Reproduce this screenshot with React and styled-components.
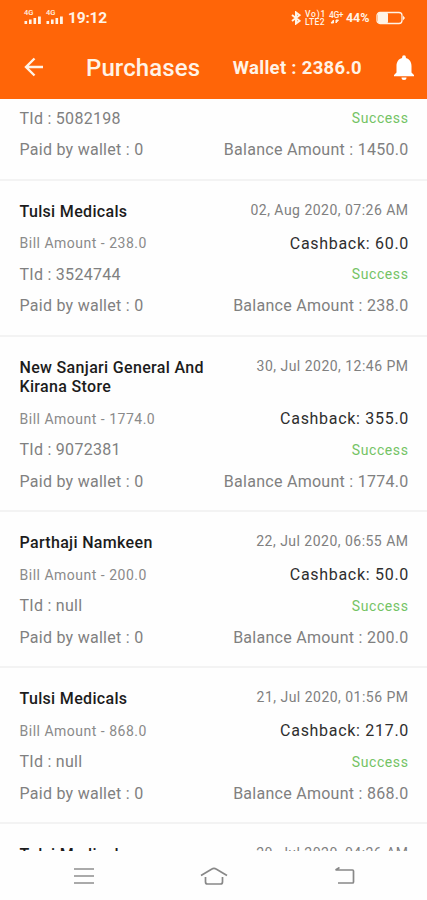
import React from "react";
import styled, { createGlobalStyle } from "styled-components";

const GlobalStyle = createGlobalStyle`
  * {
    box-sizing: border-box;
  }
  body {
    margin: 0;
    background: #fefefe;
    font-family: Roboto, "Liberation Sans", sans-serif;
  }
`;

const Screen = styled.div`
  display: flex;
  flex-direction: column;
  height: 900px;
  overflow: hidden;
`;

const Header = styled.header`
  flex: none;
  height: 99px;
  background: #ff6508;
  color: #fff3e6;
`;

const StatusBar = styled.div`
  display: flex;
  align-items: center;
  height: 35px;
  padding: 0 22px 0 24px;
`;

const Clock = styled.span`
  font-size: 15.5px;
  font-weight: 700;
  letter-spacing: -0.2px;
`;

const StatusRight = styled.div`
  display: flex;
  align-items: center;
  margin-left: auto;
`;

const SignalBox = styled.div`
  display: flex;
  flex-direction: column;
  width: 18px;
  margin: -2px 4px 0 0;
`;

const Tiny = styled.span`
  font-size: ${(p) => p.$size || 8.5}px;
  line-height: ${(p) => p.$line || 8}px;
  font-weight: 500;
  letter-spacing: ${(p) => p.$spacing || 0}px;
  white-space: nowrap;
`;

const Stack = styled.div`
  display: flex;
  flex-direction: column;
  width: ${(p) => p.$width}px;
  margin-left: ${(p) => p.$gap}px;
`;

const Percent = styled.span`
  width: 25px;
  margin: 0 5px 0 4px;
  font-size: 12.5px;
  font-weight: 700;
  letter-spacing: -0.1px;
`;

const Toolbar = styled.div`
  display: flex;
  align-items: center;
  height: 64px;
  padding: 0 13px 0 24px;
`;

const Title = styled.h1`
  margin: 2px 0 0 42px;
  font-size: 24px;
  font-weight: 500;
  letter-spacing: 0.1px;
`;

const Wallet = styled.span`
  margin-top: 2px;
  margin-left: auto;
  margin-right: 32px;
  font-size: 18.5px;
  font-weight: 700;
  letter-spacing: 0.3px;
`;

const List = styled.main`
  flex: none;
  height: 752px;
  overflow: hidden;
`;

const Card = styled.section`
  height: ${(p) => p.$height}px;
  padding: ${(p) => p.$top || 21}px 18.5px 0 19.5px;
  border-bottom: 2px solid #f3f3f3;
`;

const Row = styled.div`
  display: flex;
  justify-content: space-between;
  align-items: center;
  height: ${(p) => p.$height}px;
`;

const TopRow = styled.div`
  display: flex;
  justify-content: space-between;
  align-items: flex-start;
  margin-bottom: 6px;
`;

const Shop = styled.h2`
  width: 200px;
  margin: 0;
  color: #1c1c1c;
  font-size: 16px;
  font-weight: 500;
  line-height: 19.5px;
  letter-spacing: 0.33px;
`;

const DateText = styled.span`
  color: #808080;
  font-size: 14px;
  line-height: 17px;
  letter-spacing: 0.48px;
`;

const Bill = styled.span`
  color: #8a8a8a;
  font-size: 14px;
  letter-spacing: 0.5px;
`;

const Cashback = styled.span`
  color: #2e2e2e;
  font-size: 16px;
  letter-spacing: 0.7px;
  margin-right: -0.5px;
`;

const Detail = styled.span`
  color: #808080;
  font-size: 16px;
  letter-spacing: 0.27px;
`;

const Success = styled.span`
  color: #74c365;
  font-size: 14px;
  letter-spacing: 0.6px;
`;

const NavBar = styled.nav`
  flex: none;
  display: flex;
  align-items: center;
  height: 49px;
  padding: 0 72px 0 74px;
  justify-content: space-between;
`;

const purchases = [
  {
    id: 1,
    shop: "Tulsi Medicals",
    date: "02, Aug 2020, 07:26 AM",
    bill: "238.0",
    cashback: "60.0",
    tid: "3524744",
    balance: "238.0",
    height: 156,
  },
  {
    id: 2,
    shop: "New Sanjari General And Kirana Store",
    date: "30, Jul 2020, 12:46 PM",
    bill: "1774.0",
    cashback: "355.0",
    tid: "9072381",
    balance: "1774.0",
    height: 175.5,
  },
  {
    id: 3,
    shop: "Parthaji Namkeen",
    date: "22, Jul 2020, 06:55 AM",
    bill: "200.0",
    cashback: "50.0",
    tid: "null",
    balance: "200.0",
    height: 156,
  },
  {
    id: 4,
    shop: "Tulsi Medicals",
    date: "21, Jul 2020, 01:56 PM",
    bill: "868.0",
    cashback: "217.0",
    tid: "null",
    balance: "868.0",
    height: 156,
  },
];

function Signal() {
  return (
    <SignalBox>
      <Tiny $size={7.5} $line={5}>4G</Tiny>
      <svg width="18" height="9" viewBox="0 0 18 9" fill="currentColor">
        <rect x="0.500" y="6" width="2.600" height="3" />
        <rect x="5" y="4.500" width="2.600" height="4.500" />
        <rect x="9.500" y="3" width="2.600" height="6" />
        <rect x="14" y="1.500" width="2.800" height="7.500" />
      </svg>
    </SignalBox>
  );
}

function PaymentRows({ tid, balance }) {
  return (
    <>
      <Row $height={30}>
        <Detail>TId : {tid}</Detail>
        <Success>Success</Success>
      </Row>
      <Row $height={33.5}>
        <Detail>Paid by wallet : 0</Detail>
        <Detail>Balance Amount : {balance}</Detail>
      </Row>
    </>
  );
}

function ShopRow({ shop, date }) {
  return (
    <TopRow>
      <Shop>{shop}</Shop>
      <DateText>{date}</DateText>
    </TopRow>
  );
}

export default function App() {
  return (
    <Screen>
      <GlobalStyle />
      <Header>
        <StatusBar>
          <Signal />
          <Signal />
          <Clock>19:12</Clock>
          <StatusRight>
            <svg width="10" height="14" viewBox="0 0 10 14" fill="none" stroke="currentColor" strokeWidth="2">
              <path d="M1 4l7.500 5.800L5 12.500v-11l3.500 2.700L1 10" />
            </svg>
            <Stack $width={21} $gap={4}>
              <Tiny $spacing={0.8}>Vo)1</Tiny>
              <Tiny $spacing={0.4}>LTE2</Tiny>
            </Stack>
            <Stack $width={13} $gap={3}>
              <Tiny $spacing={-0.4}>4G+</Tiny>
              <svg width="12" height="6" viewBox="0 0 12 6" fill="currentColor">
                <path d="M2 4l2.500-3v3zM7 1v3l2.500-3z" stroke="currentColor" />
              </svg>
            </Stack>
            <Percent>44%</Percent>
            <svg width="29" height="14" viewBox="0 0 29 14">
              <rect x="1" y="1.500" width="25" height="11" rx="3" fill="none" stroke="currentColor" strokeWidth="1.300" />
              <rect x="2" y="2" width="10" height="10" rx="1" fill="currentColor" />
              <path d="M27 4.500v5l2-2.500z" fill="currentColor" />
            </svg>
          </StatusRight>
        </StatusBar>
        <Toolbar>
          <svg width="20" height="20" viewBox="0 0 20 20" fill="none" stroke="currentColor" strokeWidth="2.400">
            <path d="M19 10H2M10.500 1.500L2 10l8.500 8.500" />
          </svg>
          <Title>Purchases</Title>
          <Wallet>Wallet : 2386.0</Wallet>
          <svg width="20" height="25" viewBox="0 0 20 25" fill="#fff">
            <path d="M10 25a2.500 2.500 0 0 0 2.500-2.500h-5A2.500 2.500 0 0 0 10 25zM17.500 17.500V11c0-3.800-2-7-5.600-7.900V2.200a1.900 1.900 0 0 0-3.800 0v.900C4.500 4 2.500 7.100 2.500 11v6.500L0 20v1.300h20V20z" />
          </svg>
        </Toolbar>
      </Header>
      <List>
        <Card $height={81.6} $top={4}>
          <PaymentRows tid="5082198" balance="1450.0" />
        </Card>
        {purchases.map((item) => (
          <Card key={item.id} $height={item.height}>
            <ShopRow shop={item.shop} date={item.date} />
            <Row $height={32}>
              <Bill>Bill Amount - {item.bill}</Bill>
              <Cashback>Cashback: {item.cashback}</Cashback>
            </Row>
            <PaymentRows tid={item.tid} balance={item.balance} />
          </Card>
        ))}
        <Card $height={156}>
          <ShopRow shop="Tulsi Medicals" date="20, Jul 2020, 04:26 AM" />
        </Card>
      </List>
      <NavBar>
        <svg width="20" height="18" viewBox="0 0 20 18" stroke="#aaa" strokeWidth="2">
          <path d="M0 2h20M0 9h20M0 16h20" />
        </svg>
        <svg width="28" height="20" viewBox="0 0 28 20" fill="none" stroke="#888" strokeWidth="1.700">
          <path d="M1 9.500L11.500 3.200a5 5 0 0 1 5 0L27 9.500M5.500 11v5a2 2 0 0 0 2 2h13a2 2 0 0 0 2-2v-5" />
        </svg>
        <svg width="21" height="18" viewBox="0 0 21 18" fill="none" stroke="#888" strokeWidth="1.700">
          <path d="M1.500 3h17a1 1 0 0 1 1 1v11a1 1 0 0 1-1 1H4M5.500 0.500L1.500 3" />
        </svg>
      </NavBar>
    </Screen>
  );
}
